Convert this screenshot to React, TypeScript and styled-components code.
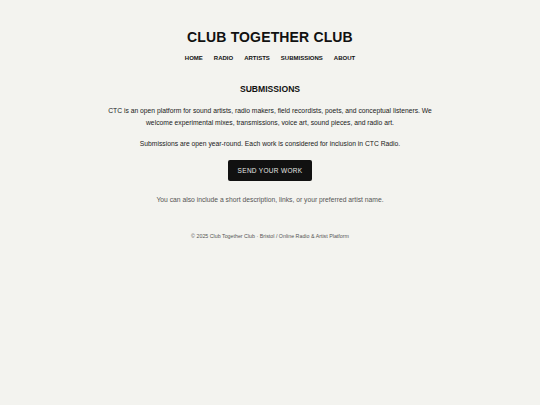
import React from "react";
import styled, { createGlobalStyle } from "styled-components";

const Global = createGlobalStyle`
  html, body { margin: 0; padding: 0; background: #f3f3ef; }
  body { font-family: "Liberation Sans", Arial, sans-serif; color: #111; }
`;

const Page = styled.div`
  display: flex;
  flex-direction: column;
  align-items: center;
  padding-top: 28px;
  min-height: 405px;
  box-sizing: border-box;
`;

const Title = styled.h1`
  margin: 0;
  font-size: 14px;
  font-weight: 700;
  letter-spacing: 0.15px;
  line-height: 18px;
`;

const Nav = styled.nav`
  display: flex;
  gap: 11px;
  margin-top: 8px;
`;

const NavLink = styled.a`
  font-size: 6px;
  font-weight: 700;
  color: #111;
  text-decoration: none;
  line-height: 9px;
`;

const Main = styled.main`
  display: flex;
  flex-direction: column;
  align-items: center;
  margin-top: 20px;
  width: 340px;
  text-align: center;
`;

const Heading = styled.h2`
  margin: 0;
  font-size: 8.6px;
  font-weight: 700;
  line-height: 12px;
`;

const Para = styled.p<{ $muted?: boolean; $gap: number }>`
  margin: ${(p) => p.$gap}px 0 0;
  font-size: 6.75px;
  line-height: 12px;
  color: ${(p) => (p.$muted ? "#555" : "#1a1a1a")};
`;

const Button = styled.a`
  display: inline-flex;
  align-items: center;
  justify-content: center;
  margin-top: 10px;
  width: 84px;
  height: 21px;
  background: #111;
  color: #e6e6e2;
  border-radius: 2px;
  font-size: 6.5px;
  letter-spacing: 0.3px;
  text-decoration: none;
`;

const Footer = styled.footer`
  margin-top: 27px;
  font-size: 5.3px;
  line-height: 7px;
  color: #555;
`;

export default function App() {
  return (
    <>
      <Global />
      <Page>
        <Title>CLUB TOGETHER CLUB</Title>
        <Nav>
          <NavLink href="#">HOME</NavLink>
          <NavLink href="#">RADIO</NavLink>
          <NavLink href="#">ARTISTS</NavLink>
          <NavLink href="#">SUBMISSIONS</NavLink>
          <NavLink href="#">ABOUT</NavLink>
        </Nav>
        <Main>
          <Heading>SUBMISSIONS</Heading>
          <Para $gap={10}>
            CTC is an open platform for sound artists, radio makers, field recordists, poets, and conceptual
            listeners. We welcome experimental mixes, transmissions, voice art, sound pieces, and radio art.
          </Para>
          <Para $gap={9}>Submissions are open year-round. Each work is considered for inclusion in CTC Radio.</Para>
          <Button href="#">SEND YOUR WORK</Button>
          <Para $muted $gap={13}>
            You can also include a short description, links, or your preferred artist name.
          </Para>
        </Main>
        <Footer>© 2025 Club Together Club · Bristol / Online Radio &amp; Artist Platform</Footer>
      </Page>
    </>
  );
}
